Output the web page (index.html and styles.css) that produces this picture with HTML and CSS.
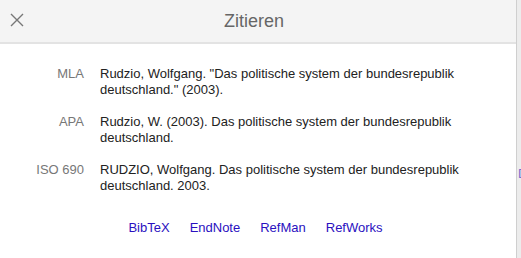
FILE: index.html
```html
<!DOCTYPE html>
<html lang="de">
<head>
    <meta charset="UTF-8">
    <title>Zitieren</title>
    <link rel="stylesheet" href="styles.css">
</head>
<body>
    <div class="page">
        <!-- Cite dialog -->
        <div class="dialog">
            <div class="dialog-header">
                <button class="close-btn" aria-label="Schließen">
                    <svg width="14" height="14" viewBox="0 0 14 14">
                        <path d="M1 1 L13 13 M13 1 L1 13" stroke="#777" stroke-width="1.4" fill="none"/>
                    </svg>
                </button>
                <div class="dialog-title">Zitieren</div>
            </div>

            <table class="cite-table">
                <tr>
                    <th>MLA</th>
                    <td>Rudzio, Wolfgang. "Das politische system der bundesrepublik deutschland." (2003).</td>
                </tr>
                <tr>
                    <th>APA</th>
                    <td>Rudzio, W. (2003). Das politische system der bundesrepublik deutschland.</td>
                </tr>
                <tr>
                    <th>ISO 690</th>
                    <td>RUDZIO, Wolfgang. Das politische system der bundesrepublik deutschland. 2003.</td>
                </tr>
            </table>

            <div class="export-links">
                <a href="#">BibTeX</a>
                <a href="#">EndNote</a>
                <a href="#">RefMan</a>
                <a href="#">RefWorks</a>
            </div>
        </div>

        <!-- page behind the dialog -->
        <div class="behind">
            <span class="behind-text">D</span>
        </div>
    </div>
</body>
</html>
```

FILE: styles.css
```css
body {
    margin: 0;
    font-family: 'Liberation Sans', Arial, sans-serif;
    background-color: #fff;
}

.page {
    display: flex;
    height: 258px;
    overflow: hidden;
}

.dialog {
    width: 516px;
    flex-shrink: 0;
    background-color: #fff;
    border-right: 1px solid #cfcfcf;
}

.dialog-header {
    position: relative;
    height: 42px;
    background-color: #f4f4f4;
    border-bottom: 2px solid #e3e3e3;
    display: flex;
    align-items: center;
    justify-content: center;
}

.close-btn {
    position: absolute;
    left: 10px;
    top: 13px;
    padding: 0;
    border: none;
    background: none;
    width: 14px;
    height: 14px;
    cursor: pointer;
}

.close-btn svg {
    display: block;
}

.dialog-title {
    font-size: 18px;
    color: #666;
    padding-right: 8px;
    padding-top: 1px;
}

.cite-table {
    border-collapse: collapse;
    margin-top: 22px;
    font-size: 13px;
    line-height: 16px;
}

.cite-table th {
    width: 84px;
    text-align: right;
    vertical-align: top;
    font-weight: normal;
    color: #777;
    padding: 0 0 16px 0;
}

.cite-table td {
    width: 380px;
    color: #222;
    vertical-align: top;
    padding: 0 0 16px 16px;
}

.export-links {
    display: flex;
    justify-content: center;
    gap: 20px;
    margin-top: 10px;
    padding-right: 5px;
    font-size: 13px;
}

.export-links a {
    color: #2a10c0;
    text-decoration: none;
}

.behind {
    flex: 1;
    background-color: #ececec;
    padding-top: 166px;
    overflow: hidden;
}

.behind-text {
    display: block;
    font-size: 13px;
    color: #7a6ccf;
    margin-left: 1px;
}
```
